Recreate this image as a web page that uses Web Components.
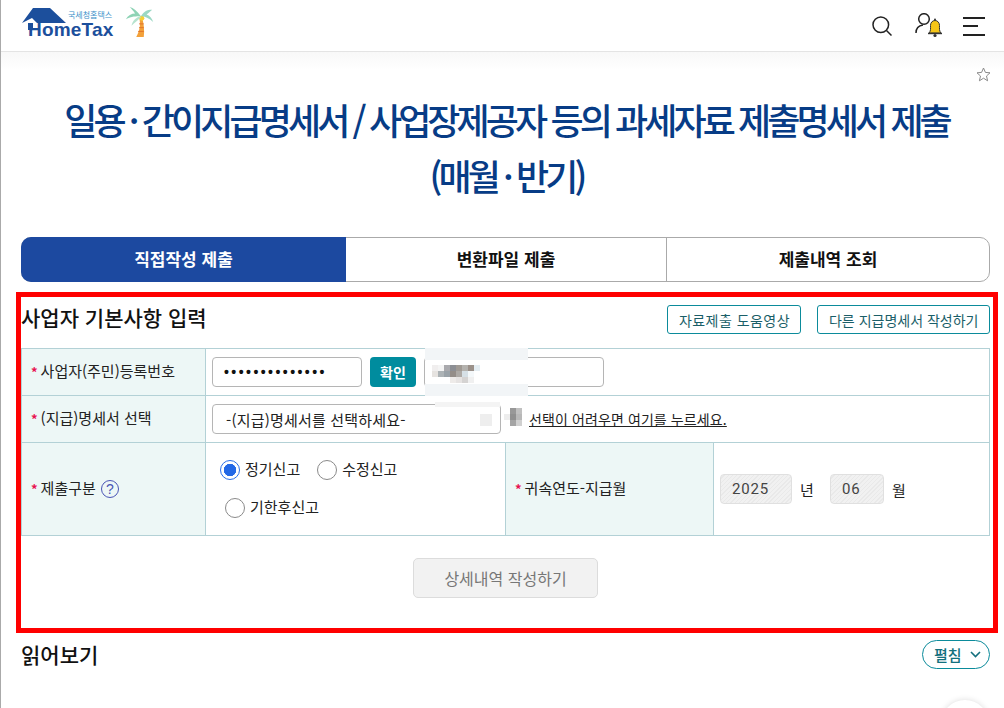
<!DOCTYPE html>
<html lang="ko">
<head>
<meta charset="utf-8">
<title>HomeTax</title>
<style>
  html, body { margin: 0; height: 100%; overflow: hidden; background: #fff; }
  body { font-family: "Noto Sans CJK KR", "Noto Sans", sans-serif; color: #222; border-left: 1px solid #aaa; box-sizing: border-box; }
</style>
</head>
<body>
<site-header></site-header>
<page-title>일용 · 간이지급명세서 / 사업장제공자 등의 과세자료 제출명세서 제출<br>(매월 · 반기)</page-title>
<tab-bar></tab-bar>
<basic-form></basic-form>
<read-more></read-more>

<script>
customElements.define('site-header', class extends HTMLElement {
  constructor() {
    super()
    this.attachShadow({ mode: 'open' }).innerHTML = `
      <style>
        :host { display: flex; justify-content: space-between; align-items: center; height: 51px; border-bottom: 1px solid #e4e4e4; padding: 0 19px 0 20px; }
        .logo { position: relative; display: flex; width: 134px; height: 40px; }
        .logo svg.house { position: absolute; left: 0; top: 0; }
        .name { position: absolute; left: 7px; top: 16px; font: 700 19px/15px "Liberation Sans", sans-serif; color: #1c4f9c; letter-spacing: .2px; }
        .kor { position: absolute; left: 47px; top: 3px; font-size: 8px; line-height: 11px; color: #3a8fc9; white-space: nowrap; }
        .palm { position: absolute; left: 104px; top: 0; }
        .icons { display: flex; align-items: center; }
        .p { margin: 0 21px 0 23px; }
      </style>
      <div class="logo">
        <svg class="house" width="46" height="24" viewBox="0 0 46 24"><path d="M1 17 L12 2 H29 L45 17 H16 L11 12 L7 14 V24 H12 V17 H7 V14 L1 17 Z" fill="#1c4f9c"/></svg>
        <span class="name">HomeTax</span>
        <span class="kor">국세청홈택스</span>
        <svg class="palm" width="30" height="32" viewBox="0 0 30 34">
          <path d="M14 12 C16 19 15 26 11 33 H19 C20 26 19 18 17 12 Z" fill="#f3a13a"/>
          <path d="M13 27 H19 M14 23 H19 M14 19 H19" stroke="#e0702a" stroke-width="1"/>
          <circle cx="17" cy="13" r="2.6" fill="#f6cf35"/>
          <path d="M16 11 C12 5 8 2 4 1 C8 5 9 7 10 8 C6 8 2 10 0 14 C6 11 11 11 16 11 Z" fill="#8ed3b5"/>
          <path d="M16 11 C19 6 22 4 28 4 C25 6 24 8 22 9 C25 10 28 13 29 17 C25 13 20 11 16 11 Z" fill="#9bd8c4"/>
          <path d="M15 11 C11 12 7 16 6 21 C10 17 13 15 16 12 Z" fill="#b6e3cf"/>
        </svg>
      </div>
      <div class="icons">
        <svg width="20" height="20" viewBox="0 0 20 20" fill="none" stroke="#222" stroke-width="1.5"><circle cx="8.8" cy="8.8" r="7.8"/><path d="M14.5 14.5 L19.5 19.5"/></svg>
        <svg class="p" width="27" height="25" viewBox="0 0 27 25" fill="none"><circle cx="9" cy="6" r="5.3" stroke="#222" stroke-width="1.5"/><path d="M1 20 C1 15 4 12.5 8 12" stroke="#222" stroke-width="1.5"/>
          <path d="M14 20 C16 18 15.5 15 15.5 12.5 C15.5 9.5 17.5 7.5 20 7.5 C22.500 7.5 24.500 9.5 24.500 12.5 C24.500 15 24 18 26 20 Z" fill="#f5c518" stroke="#333" stroke-width="1"/><path d="M13 20.500 H27" stroke="#333" stroke-width="1.4"/><circle cx="20" cy="22.500" r="1.6" fill="#333"/><circle cx="20" cy="6.500" r="1" fill="#333"/></svg>
        <svg width="22" height="20" viewBox="0 0 22 20" stroke="#222" stroke-width="2"><path d="M0 2 H22 M0 10 H15 M0 19 H22"/></svg>
      </div>`
  }
})

customElements.define('page-title', class extends HTMLElement {
  constructor() {
    super()
    this.attachShadow({ mode: 'open' }).innerHTML = `
      <style>
        :host { display: block; position: relative; height: 185px; background: linear-gradient(#f8f8f8, #fff 18px); text-align: center; }
        h1 { margin: 0; padding: 39px 0 0 8px; font-size: 36px; font-weight: 500; line-height: 56px; letter-spacing: -3.9px; color: #073c86; }
        svg { position: absolute; right: 13px; top: 15px; }
      </style>
      <h1><slot></slot></h1>
      <svg width="15" height="15" viewBox="0 0 15 15" fill="none" stroke="#8a8a8a" stroke-width="1"><path d="M7.5 1 L9.4 5.4 L14 5.8 L10.5 9 L11.6 13.8 L7.500 11.200 L3.4 13.8 L4.5 9 L1 5.8 L5.6 5.4 Z"/></svg>`
  }
})

customElements.define('tab-bar', class extends HTMLElement {
  constructor() {
    super()
    this.attachShadow({ mode: 'open' }).innerHTML = `
      <style>
        :host { display: flex; margin: 0 14px 0 20px; height: 45px; border: 1px solid #aaa; border-radius: 10px; box-sizing: border-box; font-size: 17px; font-weight: 700; line-height: 24px; color: #111; }
        div { display: flex; align-items: center; justify-content: center; padding-bottom: 2px; box-sizing: border-box; }
        .on { width: 325px; margin: -1px 0 -1px -1px; background: #1c49a0; color: #fff; border-radius: 10px 0 0 10px; }
        .mid { width: 321px; border-right: 1px solid #aaa; }
        .last { flex: 1; }
      </style>
      <div class="on">직접작성 제출</div>
      <div class="mid">변환파일 제출</div>
      <div class="last">제출내역 조회</div>`
  }
})

customElements.define('req-label', class extends HTMLElement {
  constructor() {
    super()
    this.attachShadow({ mode: 'open' }).innerHTML = `
      <style>
        :host { display: inline-flex; align-items: center; font-size: 15px; line-height: 22px; color: #222; white-space: nowrap; }
        b { color: #e8124f; font-size: 13px; font-weight: 700; margin-right: 3px; }
        span { position: relative; top: -1px; }
      </style>
      <b>*</b><span><slot></slot></span>`
  }
})

customElements.define('radio-option', class extends HTMLElement {
  constructor() {
    super()
    this.attachShadow({ mode: 'open' }).innerHTML = `
      <style>
        :host { display: inline-flex; align-items: center; gap: 5px; font-size: 15px; line-height: 22px; color: #222; white-space: nowrap; }
        i { width: 20px; height: 20px; box-sizing: border-box; border: 1px solid #8a8a8a; border-radius: 50%; background: #fff; }
        :host([checked]) i { border-color: #2b6fe8; background: radial-gradient(circle, #2368e6 0 6px, #fff 6.5px); }
        span { position: relative; top: -1px; }
      </style>
      <i></i><span><slot></slot></span>`
  }
})

customElements.define('outline-button', class extends HTMLElement {
  constructor() {
    super()
    this.attachShadow({ mode: 'open' }).innerHTML = `
      <style>
        :host { display: inline-flex; align-items: center; justify-content: center; height: 29px; padding: 0 10.5px; box-sizing: border-box; border: 1px solid #0b8b9b; border-radius: 3px; font-size: 14px; color: #1a5e68; background: #fff; white-space: nowrap; }
      </style>
      <slot></slot>`
  }
})

customElements.define('mosaic-patch', class extends HTMLElement {
  constructor() {
    super()
    const cells = (this.getAttribute('cells') || '').split(' ')
    const size = this.getAttribute('size') || 6
    const cols = this.getAttribute('cols') || 1
    this.attachShadow({ mode: 'open' }).innerHTML = `
      <style>
        :host { display: grid; grid-template-columns: repeat(${cols}, ${size}px); grid-auto-rows: ${size}px; position: absolute; }
      </style>
      ${cells.map(c => `<div style="background:#${c}"></div>`).join('')}`
  }
})

customElements.define('basic-form', class extends HTMLElement {
  constructor() {
    super()
    this.attachShadow({ mode: 'open' }).innerHTML = `
      <style>
        :host { display: block; position: relative; margin: 10px 6px 0 15px; height: 341px; border: 5px solid #ff0000; box-sizing: border-box; padding: 0 3px 0 0; }
        .top { display: flex; align-items: center; height: 51px; }
        h2 { margin: 0; font-size: 21px; font-weight: 500; line-height: 28px; color: #111; flex: 1; position: relative; top: -6px; }
        .btns { display: flex; gap: 16px; position: relative; top: -3px; }
        .first { letter-spacing: .45px; }
        .grid { display: grid; grid-template-columns: 184px 300px 208px 1fr; grid-template-rows: 47px 47px 93px; border-top: 1px solid #b3d1d6; border-left: 1px solid #b3d1d6; }
        .grid > * { border-right: 1px solid #b3d1d6; border-bottom: 1px solid #b3d1d6; box-sizing: border-box; min-width: 0; display: flex; align-items: center; }
        .th { background: #edf7f6; padding-left: 9px; }
        .wide { grid-column: span 3; padding-left: 6px; gap: 8px; }
        .field { box-sizing: border-box; height: 30px; border: 1px solid #b5b5b5; border-radius: 4px; background: #fff; font-size: 15px; display: flex; align-items: center; }
        .pass { width: 150px; padding-left: 11px; letter-spacing: 2.45px; font: 14px "Liberation Sans", sans-serif; font-weight: 700; color: #111; }
        .confirm { display: flex; align-items: center; justify-content: center; width: 46px; height: 30px; background: #008c9e; color: #fff; font-size: 14px; font-weight: 700; border-radius: 4px; }
        .name { width: 180px; }
        .select { width: 289px; padding-left: 13px; height: 30px; color: #222; letter-spacing: .2px; }
        .help { font-size: 14px; color: #222; text-decoration: underline; margin-left: 20px; white-space: nowrap; letter-spacing: .1px; }
        .radios { display: block; padding: 16px 0 0 14px; }
        .radios .row { display: flex; gap: 17px; height: 38px; align-items: flex-start; }
        .radios .row + .row { padding-left: 5px; }
        .q { display: inline-flex; align-items: center; justify-content: center; width: 18px; height: 18px; margin-left: 5px; border: 1px solid #4a55b5; border-radius: 50%; box-sizing: border-box; font: 14px "Liberation Sans", sans-serif; color: #4a55b5; }
        .period { padding-left: 6px; font-size: 15px; color: #222; }
        .ro { display: flex; align-items: center; box-sizing: border-box; height: 30px; padding-left: 11px; border: 1px solid #e0e0e0; border-radius: 4px; color: #444; background: repeating-linear-gradient(135deg, #f1f1f1 0 2px, #e9e9e9 2px 3px); font-family: Roboto, "Noto Sans", sans-serif; font-size: 15px; letter-spacing: .8px; }
        .y { width: 72px; }
        .m { width: 54px; margin-right: 8px; }
        .u { width: 38px; padding-left: 8px; box-sizing: border-box; }
        .foot { display: flex; justify-content: center; padding-top: 22px; }
        .go { display: flex; align-items: center; justify-content: center; width: 185px; height: 40px; box-sizing: border-box; border: 1px solid #dcdcdc; border-radius: 5px; background: #f2f2f2; color: #777; font-size: 16px; }
        .glare { position: absolute; background: #f2f5f7; }
      </style>
      <div class="top">
        <h2>사업자 기본사항 입력</h2>
        <div class="btns"><outline-button class="first">자료제출 도움영상</outline-button><outline-button>다른 지급명세서 작성하기</outline-button></div>
      </div>
      <div class="grid">
        <div class="th"><req-label>사업자(주민)등록번호</req-label></div>
        <div class="wide">
          <div class="field pass">••••••••••••••</div>
          <div class="confirm">확인</div>
          <div class="field name"></div>
        </div>
        <div class="th"><req-label>(지급)명세서 선택</req-label></div>
        <div class="wide">
          <div class="field select">-(지급)명세서를 선택하세요-</div>
          <span class="help">선택이 어려우면 여기를 누르세요.</span>
        </div>
        <div class="th"><req-label>제출구분</req-label><span class="q">?</span></div>
        <div class="radios">
          <div class="row"><radio-option checked>정기신고</radio-option><radio-option>수정신고</radio-option></div>
          <div class="row"><radio-option>기한후신고</radio-option></div>
        </div>
        <div class="th"><req-label>귀속연도-지급월</req-label></div>
        <div class="period">
          <div class="ro y">2025</div><span class="u">년</span><div class="ro m">06</div><span>월</span>
        </div>
      </div>
      <div class="foot"><div class="go">상세내역 작성하기</div></div>

      <div class="glare" style="left:404px;top:51px;width:103px;height:12px"></div>
      <div class="glare" style="left:404px;top:87px;width:103px;height:12px"></div>
      <div class="glare" style="left:414px;top:105px;width:65px;height:5px;background:#f4f4f4"></div>
      <mosaic-patch size="6" cols="8" style="left:411px;top:68px" cells="f0eeee f4f4f4 a9a9ad 8d8f94 a09a94 b4b2ae 9b918a e4edf2 e6e3e0 adb3b6 9aa2a8 948d88 ada9a5 d6e0e6 f4f8fa fff fff fff fff eeebe9 e6e3e2 d5d3d2 f0f0f0 fff"></mosaic-patch>
      <mosaic-patch size="6" cols="3" style="left:483px;top:111px" cells="fff 989898 c0c0c0 ededed 909090 b8b8b8 fff a4a4a4 d0d0d0"></mosaic-patch>
      <mosaic-patch size="12" cols="1" style="left:459px;top:117px" cells="eeeeee"></mosaic-patch>`
  }
})

customElements.define('read-more', class extends HTMLElement {
  constructor() {
    super()
    this.attachShadow({ mode: 'open' }).innerHTML = `
      <style>
        :host { display: flex; position: relative; justify-content: space-between; align-items: flex-start; margin: 7px 14px 0 20px; height: 68px; overflow: hidden; }
        h2 { margin: 0; font-size: 21px; font-weight: 500; line-height: 29px; color: #111; }
        .open { display: flex; align-items: center; gap: 8px; box-sizing: border-box; width: 68px; height: 29px; padding-left: 11px; border: 1px solid #0b8b9b; border-radius: 15px; font-size: 15px; font-weight: 500; color: #14707e; }
        .top { position: absolute; right: 1px; top: 60px; width: 48px; height: 48px; border-radius: 50%; background: #fff; box-shadow: 0 0 6px rgba(0,0,0,.14); }
      </style>
      <h2>읽어보기</h2>
      <div class="open">펼침<svg width="11" height="7" viewBox="0 0 11 7" fill="none" stroke="#14707e" stroke-width="1.6"><path d="M1 1 L5.5 5.5 L10 1"/></svg></div>
      <div class="top"></div>`
  }
})
</script>
</body>
</html>
